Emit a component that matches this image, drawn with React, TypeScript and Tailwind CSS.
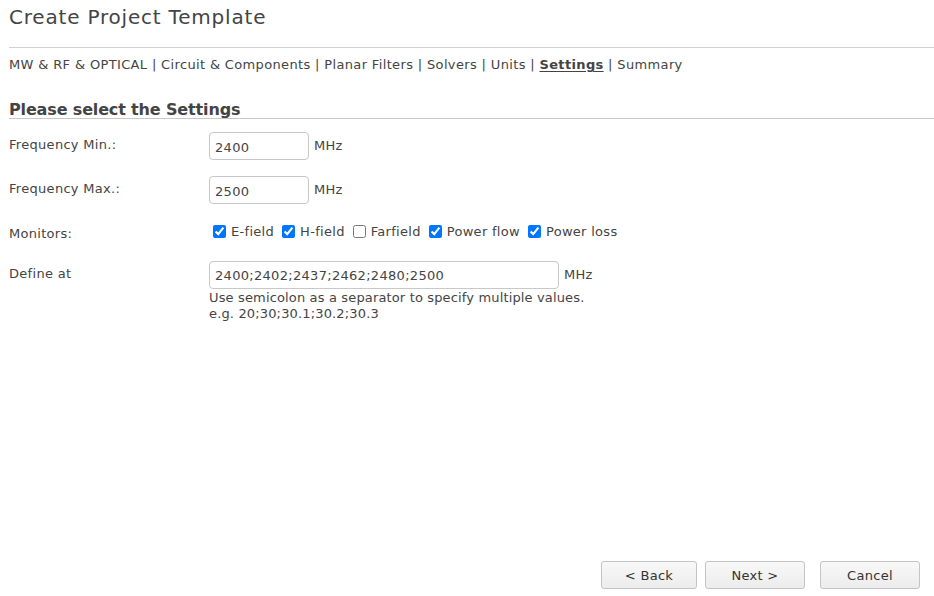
import { useState } from "react";

const steps = [
  "MW & RF & OPTICAL",
  "Circuit & Components",
  "Planar Filters",
  "Solvers",
  "Units",
  "Settings",
  "Summary",
];

const monitors = [
  { name: "E-field", on: true },
  { name: "H-field", on: true },
  { name: "Farfield", on: false },
  { name: "Power flow", on: true },
  { name: "Power loss", on: true },
];

const font = "font-['DejaVu_Sans','Verdana',sans-serif]";

const FieldRow = ({ label, value }: { label: string; value: string }) => (
  <div className="flex items-start">
    <label className="w-[200px] pt-[3px]">{label}</label>
    <div className="flex items-start gap-[5px]">
      <input
        defaultValue={value}
        className="w-[100px] h-[28px] rounded-[4px] border border-[#c8c8c8] px-[5px] pt-[2px] outline-none tracking-[0.3px]"
      />
      <span className="pt-[4px]">MHz</span>
    </div>
  </div>
);

const Button = ({ w, children }: { w: string; children: React.ReactNode }) => (
  <button
    className={`${w} h-[28px] pt-[1px] rounded-[3px] border border-[#c4c4c4] bg-gradient-to-b from-[#f8f8f8] to-[#ececec] text-[#333] tracking-[0.3px]`}
  >
    {children}
  </button>
);

export default function App() {
  const [checked, setChecked] = useState(monitors.map((m) => m.on));

  return (
    <div className={`${font} w-[934px] h-[596px] flex flex-col bg-white text-[13px] text-[#444] pl-[9px] tracking-[0.3px]`}>
      <h1 className="text-[20px] text-[#444] pt-[4px] leading-[26px] tracking-[0.8px]">Create Project Template</h1>

      <div className="mt-[17px] border-t border-[#d0d0d0]" />

      {/* wizard breadcrumb */}
      <nav className="mt-[8px] leading-[17px] tracking-[0.35px]">
        {steps.map((s, i) => (
          <span key={s}>
            {s === "Settings" ? <b className="underline underline-offset-2">{s}</b> : s}
            {i < steps.length - 1 && " | "}
          </span>
        ))}
      </nav>

      <h2 className="mt-[28px] text-[16px] font-bold leading-[17px] border-b border-[#c8c8c8] tracking-[-0.15px]">
        Please select the Settings
      </h2>

      <div className="mt-[13px] flex flex-col gap-[16px]">
        <FieldRow label="Frequency Min.:" value="2400" />
        <FieldRow label="Frequency Max.:" value="2500" />

        <div className="flex items-center">
          <span className="w-[200px] pt-[4px]">Monitors:</span>
          <div className="flex items-center gap-[4px]">
            {monitors.map((m, i) => (
              <label key={m.name} className="flex items-center gap-[5px]">
                <input
                  type="checkbox"
                  checked={checked[i]}
                  onChange={() => setChecked((c) => c.map((v, j) => (j === i ? !v : v)))}
                  className="w-[13px] h-[13px] ml-[4px] accent-[#0075ff]"
                />
                <span>{m.name}</span>
              </label>
            ))}
          </div>
        </div>

        <div className="flex items-start mt-[1px]">
          <span className="w-[200px] pt-[3px]">Define at</span>
          <div className="flex flex-col">
            <div className="flex items-start gap-[5px]">
              <input
                defaultValue="2400;2402;2437;2462;2480;2500"
                className="w-[350px] h-[28px] rounded-[4px] border border-[#c8c8c8] px-[5px] pt-[2px] outline-none tracking-[0.3px]"
              />
              <span className="pt-[4px]">MHz</span>
            </div>
            <p className="leading-[16px] mt-[1px] tracking-[0.15px]">
              Use semicolon as a separator to specify multiple values.
            </p>
            <p className="leading-[16px] tracking-[0.15px]">e.g. 20;30;30.1;30.2;30.3</p>
          </div>
        </div>
      </div>

      <div className="mt-auto mb-[7px] flex justify-end pr-[14px]">
        <div className="flex gap-[8px]">
          <Button w="w-[96px]">&lt; Back</Button>
          <Button w="w-[100px]">Next &gt;</Button>
        </div>
        <div className="ml-[15px]">
          <Button w="w-[100px]">Cancel</Button>
        </div>
      </div>
    </div>
  );
}
